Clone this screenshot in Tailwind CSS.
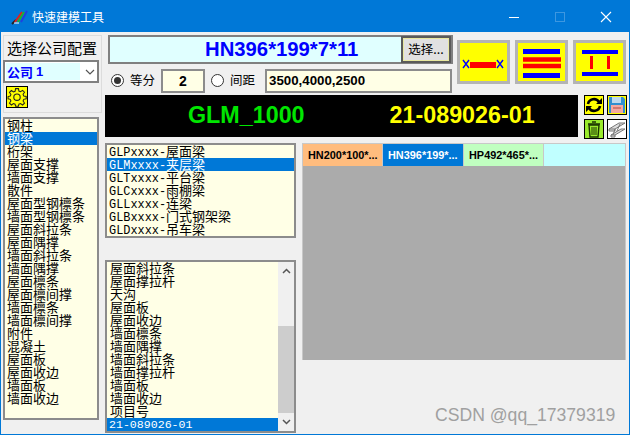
<!DOCTYPE html>
<html lang="zh-CN">
<head>
    <meta charset="UTF-8">
    <title>快速建模工具</title>
    <script src="https://cdn.jsdelivr.net/npm/@tailwindcss/browser@4"></script>
</head>
<body class="bg-[#f0f0f0]">
<div class="relative w-[630px] h-[435px] overflow-hidden flex flex-col border border-[#0078d7] bg-[#f0f0f0] text-black font-['Noto_Sans_CJK_SC',sans-serif]">

    <!-- title bar -->
    <div class="h-[31px] shrink-0 bg-[#0078d7] flex items-center text-white">
        <svg class="ml-[10px] w-[17px] h-[16px]" viewBox="0 0 17 16">
            <path d="M1 15 L5 11" stroke="#222" stroke-width="2"/>
            <path d="M4 13 L11 3" stroke="#e02020" stroke-width="2"/>
            <path d="M7 13 L13 3" stroke="#20b030" stroke-width="2"/>
            <path d="M10 13 L16 2" stroke="#2040e0" stroke-width="2"/>
            <path d="M3 14 L8 14" stroke="#fff" stroke-width="1"/>
        </svg>
        <span class="ml-[4px] text-[12px] leading-none">快速建模工具</span>
        <div class="ml-auto flex items-center">
            <svg class="w-[46px] h-[16px]" viewBox="0 0 46 16"><path d="M18 8.5H28" stroke="#fff"/></svg>
            <svg class="w-[46px] h-[16px]" viewBox="0 0 46 16"><rect x="18.5" y="3.5" width="9" height="9" fill="none" stroke="#3d97e0"/></svg>
            <svg class="w-[46px] h-[16px]" viewBox="0 0 46 16"><path d="M18 3L28 13M28 3L18 13" stroke="#fff" stroke-width="1.1"/></svg>
        </div>
    </div>

    <div class="flex-1 flex">
        <!-- left column -->
        <div class="ml-[2px] w-[100px] shrink-0 flex flex-col pt-[3px]">
            <div class="h-[78px] w-[99px] border border-[#dcdcdc] flex flex-col">
                <div class="h-[24px] pl-[3px] pb-[2px] flex items-center text-[15px] leading-none whitespace-nowrap">选择公司配置</div>
                <div class="h-[23px] w-[96px] ml-[-1px] border-2 border-[#808080] bg-white flex items-center pl-[1px]">
                    <div class="w-[74px] h-[17px] bg-[#e0ffff] flex items-center pl-[1px] text-[13px] font-bold text-[#0000ff] leading-none">公司<span class="ml-[3px] font-['Liberation_Sans']">1</span></div>
                    <svg class="ml-[5px] w-[10px] h-[6px]" viewBox="0 0 10 6"><path d="M1 1L5 5L9 1" fill="none" stroke="#555" stroke-width="1.2"/></svg>
                </div>
                <div class="mt-[3px] ml-[2px] w-[22px] h-[22px] bg-[#ffff00] border border-black flex items-center justify-center">
                    <svg class="w-[20px] h-[20px]" viewBox="0 0 20 20">
                        <path d="M8.5 1.5h3l.5 2.6 1.7.7 2.2-1.5 2 2-1.5 2.2.7 1.7 2.6.5v2.6l-2.6.5-.7 1.7 1.5 2.2-2 2-2.2-1.5-1.7.7-.5 2.1h-3l-.5-2.1-1.7-.7-2.2 1.5-2-2 1.5-2.2-.7-1.7-2.3-.5V9.9l2.3-.5.7-1.7-1.5-2.2 2-2 2.2 1.5 1.7-.7z" transform="translate(0.5 0.2) scale(0.95)" fill="none" stroke="#222" stroke-width="1.1"/>
                        <circle cx="10" cy="10.2" r="3.2" fill="none" stroke="#222" stroke-width="1.1"/>
                    </svg>
                </div>
            </div>
            <div class="mt-[4px] w-[96px] h-[303px] border-2 border-[#8c8c8c] bg-[#ffffe6] text-[13px] leading-[12px]">
                <div class="h-[13px] pl-[2px]">钢柱</div>
                <div class="h-[13px] pl-[2px] bg-[#0078d7] text-white">钢梁</div>
                <div class="h-[13px] pl-[2px]">桁架</div>
                <div class="h-[13px] pl-[2px]">屋面支撑</div>
                <div class="h-[13px] pl-[2px]">墙面支撑</div>
                <div class="h-[13px] pl-[2px]">散件</div>
                <div class="h-[13px] pl-[2px]">屋面型钢檩条</div>
                <div class="h-[13px] pl-[2px]">墙面型钢檩条</div>
                <div class="h-[13px] pl-[2px]">屋面斜拉条</div>
                <div class="h-[13px] pl-[2px]">屋面隅撑</div>
                <div class="h-[13px] pl-[2px]">墙面斜拉条</div>
                <div class="h-[13px] pl-[2px]">墙面隅撑</div>
                <div class="h-[13px] pl-[2px]">屋面檩条</div>
                <div class="h-[13px] pl-[2px]">屋面檩间撑</div>
                <div class="h-[13px] pl-[2px]">墙面檩条</div>
                <div class="h-[13px] pl-[2px]">墙面檩间撑</div>
                <div class="h-[13px] pl-[2px]">附件</div>
                <div class="h-[13px] pl-[2px]">混凝土</div>
                <div class="h-[13px] pl-[2px]">屋面板</div>
                <div class="h-[13px] pl-[2px]">屋面收边</div>
                <div class="h-[13px] pl-[2px]">墙面板</div>
                <div class="h-[13px] pl-[2px]">墙面收边</div>
            </div>
        </div>

        <!-- right column -->
        <div class="ml-[2px] flex-1 flex flex-col pt-[3px]">
            <div class="h-[60px] flex">
                <div class="ml-[3px] w-[345px] flex flex-col">
                    <div class="h-[29px] border-2 border-[#808080] bg-[#e0ffff] flex items-center">
                        <div class="flex-1 pl-[95px] font-['Liberation_Sans'] font-bold text-[20.3px] leading-none text-[#0000ff]">HN396*199*7*11</div>
                        <div class="w-[50px] h-[27px] bg-[#e1e1e1] border-2 border-[#5a5a5a] outline outline-1 outline-[#e8e8a0] -outline-offset-3 flex items-center justify-center text-[12.5px] leading-none">选择...</div>
                    </div>
                    <div class="mt-[4px] h-[25px] flex items-center text-[12.5px] whitespace-nowrap">
                        <span class="ml-[3px] shrink-0 w-[13px] h-[13px] rounded-full border border-[#333] bg-white flex items-center justify-center"><span class="w-[7px] h-[7px] rounded-full bg-[#333]"></span></span>
                        <span class="ml-[6px] shrink-0 w-[25px] leading-none">等分</span>
                        <div class="ml-[6px] shrink-0 w-[44px] h-[24px] border-2 border-[#8c8c8c] bg-[#ffffe6] flex items-center justify-center font-['Liberation_Sans'] font-bold text-[14px] leading-none">2</div>
                        <span class="ml-[6px] shrink-0 w-[13px] h-[13px] rounded-full border border-[#333] bg-white"></span>
                        <span class="ml-[6px] shrink-0 w-[25px] leading-none">间距</span>
                        <div class="ml-[10px] shrink-0 w-[187px] h-[24px] border-2 border-[#8c8c8c] bg-[#ffffe6] flex items-center pl-[2px] font-['Liberation_Sans'] font-bold text-[13.3px] leading-none">3500,4000,2500</div>
                    </div>
                </div>
                <div class="ml-[4px] mt-[5px] flex gap-[5px]">
                    <div class="w-[53px] h-[44px] border-[3px] border-[#b4b4b4] bg-[#ffff00] flex items-center justify-center">
                        <svg class="w-[47px] h-[38px]" viewBox="0 0 47 38">
                            <path d="M10 22H36" stroke="#f00" stroke-width="6"/>
                            <path d="M3 17l6 8M9 17l-6 8M37 17l6 8M43 17l-6 8" stroke="#00f" stroke-width="1.4" fill="none"/>
                        </svg>
                    </div>
                    <div class="w-[53px] h-[44px] border-[3px] border-[#b4b4b4] bg-[#ffff00] flex items-center justify-center">
                        <svg class="w-[47px] h-[38px]" viewBox="0 0 47 38">
                            <path d="M5 8.500H42M5 32.500H42" stroke="#00f" stroke-width="5"/>
                            <path d="M5 16.500H43M5 23H43" stroke="#f00" stroke-width="4.500"/>
                        </svg>
                    </div>
                    <div class="w-[53px] h-[44px] border-[3px] border-[#b4b4b4] bg-[#ffff00] flex items-center justify-center">
                        <svg class="w-[47px] h-[38px]" viewBox="0 0 47 38">
                            <path d="M6 9H42M6 31H42" stroke="#00f" stroke-width="4"/>
                            <path d="M15.500 13V26M32.500 13V26" stroke="#f00" stroke-width="3"/>
                        </svg>
                    </div>
                </div>
            </div>

            <div class="h-[44px] flex">
                <div class="w-[473px] h-[42px] bg-black flex items-center font-['Liberation_Sans'] font-bold text-[23.3px] leading-none">
                    <span class="ml-[83px] text-[#00e600]">GLM_1000</span>
                    <span class="ml-[85px] text-[#ffff00]">21-089026-01</span>
                </div>
                <div class="ml-[6px] grid grid-cols-[20px_20px] grid-rows-[20px_20px] gap-x-[3px] gap-y-[4px]">
                    <div class="bg-[#ffff00] border border-black">
                        <svg class="w-[18px] h-[18px]" viewBox="0 0 18 18"><path d="M3 8A6 6 0 0 1 14 6M15 10A6 6 0 0 1 4 12" fill="none" stroke="#000" stroke-width="2.600"/><path d="M11 8h6V2zM7 10H1v6z" fill="#000"/></svg>
                    </div>
                    <div class="bg-[#ffff00] border border-black">
                        <svg class="w-[18px] h-[18px]" viewBox="0 0 18 18"><path d="M1 1H15L17 3V17H1z" fill="#2f8fd0"/><rect x="4" y="1" width="9" height="6" fill="#bcd9ee"/><rect x="3" y="9" width="12" height="8" fill="#f4a8a0"/><path d="M5 12H13" stroke="#b04a40"/></svg>
                    </div>
                    <div class="bg-[#9aea2c] border border-black">
                        <svg class="w-[18px] h-[18px]" viewBox="0 0 18 18"><path d="M3 4H15M7 2H11" stroke="#1a3300" stroke-width="1.500"/><path d="M4 5H14L13 17H5z" fill="none" stroke="#1a3300" stroke-width="1.400"/><path d="M7 7V15M9 7V15M11 7V15" stroke="#1a3300"/></svg>
                    </div>
                    <div class="bg-white border border-black">
                        <svg class="w-[18px] h-[18px]" viewBox="0 0 18 18"><path d="M1 9L11 3H17L7 9zM1 9V11H7V9M3 15L13 9H17L7 15zM3 15V17H7V15M7 9L5 15M12 4L9 11" fill="#ddd" stroke="#777" stroke-width="1"/></svg>
                    </div>
                </div>
            </div>

            <div class="mt-[4px] flex">
                <div class="w-[191px] flex flex-col">
                    <div class="h-[95px] border-2 border-[#8c8c8c] bg-[#ffffe6] text-[13px] leading-[12px]">
                        <div class="h-[13px] pl-[2px] flex items-baseline"><span class="font-['Liberation_Mono'] text-[11.9px] leading-none">GLPxxxx-</span>屋面梁</div>
                        <div class="h-[13px] pl-[2px] flex items-baseline bg-[#0078d7] text-white"><span class="font-['Liberation_Mono'] text-[11.9px] leading-none">GLMxxxx-</span>夹层梁</div>
                        <div class="h-[13px] pl-[2px] flex items-baseline"><span class="font-['Liberation_Mono'] text-[11.9px] leading-none">GLTxxxx-</span>平台梁</div>
                        <div class="h-[13px] pl-[2px] flex items-baseline"><span class="font-['Liberation_Mono'] text-[11.9px] leading-none">GLCxxxx-</span>雨棚梁</div>
                        <div class="h-[13px] pl-[2px] flex items-baseline"><span class="font-['Liberation_Mono'] text-[11.9px] leading-none">GLLxxxx-</span>连梁</div>
                        <div class="h-[13px] pl-[2px] flex items-baseline"><span class="font-['Liberation_Mono'] text-[11.9px] leading-none">GLBxxxx-</span>门式钢架梁</div>
                        <div class="h-[13px] pl-[2px] flex items-baseline"><span class="font-['Liberation_Mono'] text-[11.9px] leading-none">GLDxxxx-</span>吊车梁</div>
                    </div>
                    <div class="mt-[22px] h-[173px] border-2 border-[#8c8c8c] bg-[#ffffe6] flex">
                        <div class="flex-1 text-[13px] leading-[12px]">
                            <div class="h-[13px] pl-[3px]">屋面斜拉条</div>
                            <div class="h-[13px] pl-[3px]">屋面撑拉杆</div>
                            <div class="h-[13px] pl-[3px]">天沟</div>
                            <div class="h-[13px] pl-[3px]">屋面板</div>
                            <div class="h-[13px] pl-[3px]">屋面收边</div>
                            <div class="h-[13px] pl-[3px]">墙面檩条</div>
                            <div class="h-[13px] pl-[3px]">墙面隅撑</div>
                            <div class="h-[13px] pl-[3px]">墙面斜拉条</div>
                            <div class="h-[13px] pl-[3px]">墙面撑拉杆</div>
                            <div class="h-[13px] pl-[3px]">墙面板</div>
                            <div class="h-[13px] pl-[3px]">墙面收边</div>
                            <div class="h-[13px] pl-[3px]">项目号</div>
                            <div class="h-[13px] pl-[2px] flex items-center bg-[#0078d7] text-white font-['Liberation_Mono'] text-[11.6px] leading-none">21-089026-01</div>
                        </div>
                        <div class="w-[16px] bg-[#f0f0f0] flex flex-col">
                            <div class="h-[17px] flex items-center justify-center"><svg class="w-[9px] h-[6px]" viewBox="0 0 9 6"><path d="M1 5L4.500 1.500L8 5" fill="none" stroke="#555" stroke-width="1.500"/></svg></div>
                            <div class="mt-[47px] h-[87px] bg-[#cdcdcd]"></div>
                            <div class="flex-1 flex items-center justify-center"><svg class="w-[9px] h-[6px]" viewBox="0 0 9 6"><path d="M1 1L4.500 4.500L8 1" fill="none" stroke="#555" stroke-width="1.500"/></svg></div>
                        </div>
                    </div>
                </div>
                <div class="ml-[6px] w-[324px] h-[217px] flex flex-col border-t border-l border-r border-[#c8c8c8]">
                    <div class="h-[22px] flex gap-[1px] bg-[#c8c8c8] font-['Liberation_Sans'] font-bold text-[10.900px] leading-none">
                        <div class="w-[79px] bg-[#ffbc7e] flex items-center pl-[5px] whitespace-nowrap">HN200*100*...</div>
                        <div class="w-[80px] bg-[#0078d7] text-white flex items-center pl-[5px] whitespace-nowrap">HN396*199*...</div>
                        <div class="w-[79px] bg-[#c0ffc0] flex items-center pl-[5px] whitespace-nowrap">HP492*465*...</div>
                        <div class="flex-1 bg-[#c0ffff]"></div>
                    </div>
                    <div class="flex-1 bg-[#ababab]"></div>
                </div>
            </div>
        </div>
    </div>

    <div class="absolute left-[434px] top-[406px] font-['Liberation_Sans'] text-[17.600px] leading-none text-[#a0a0a0]">CSDN @qq_17379319</div>
</div>
</body>
</html>
